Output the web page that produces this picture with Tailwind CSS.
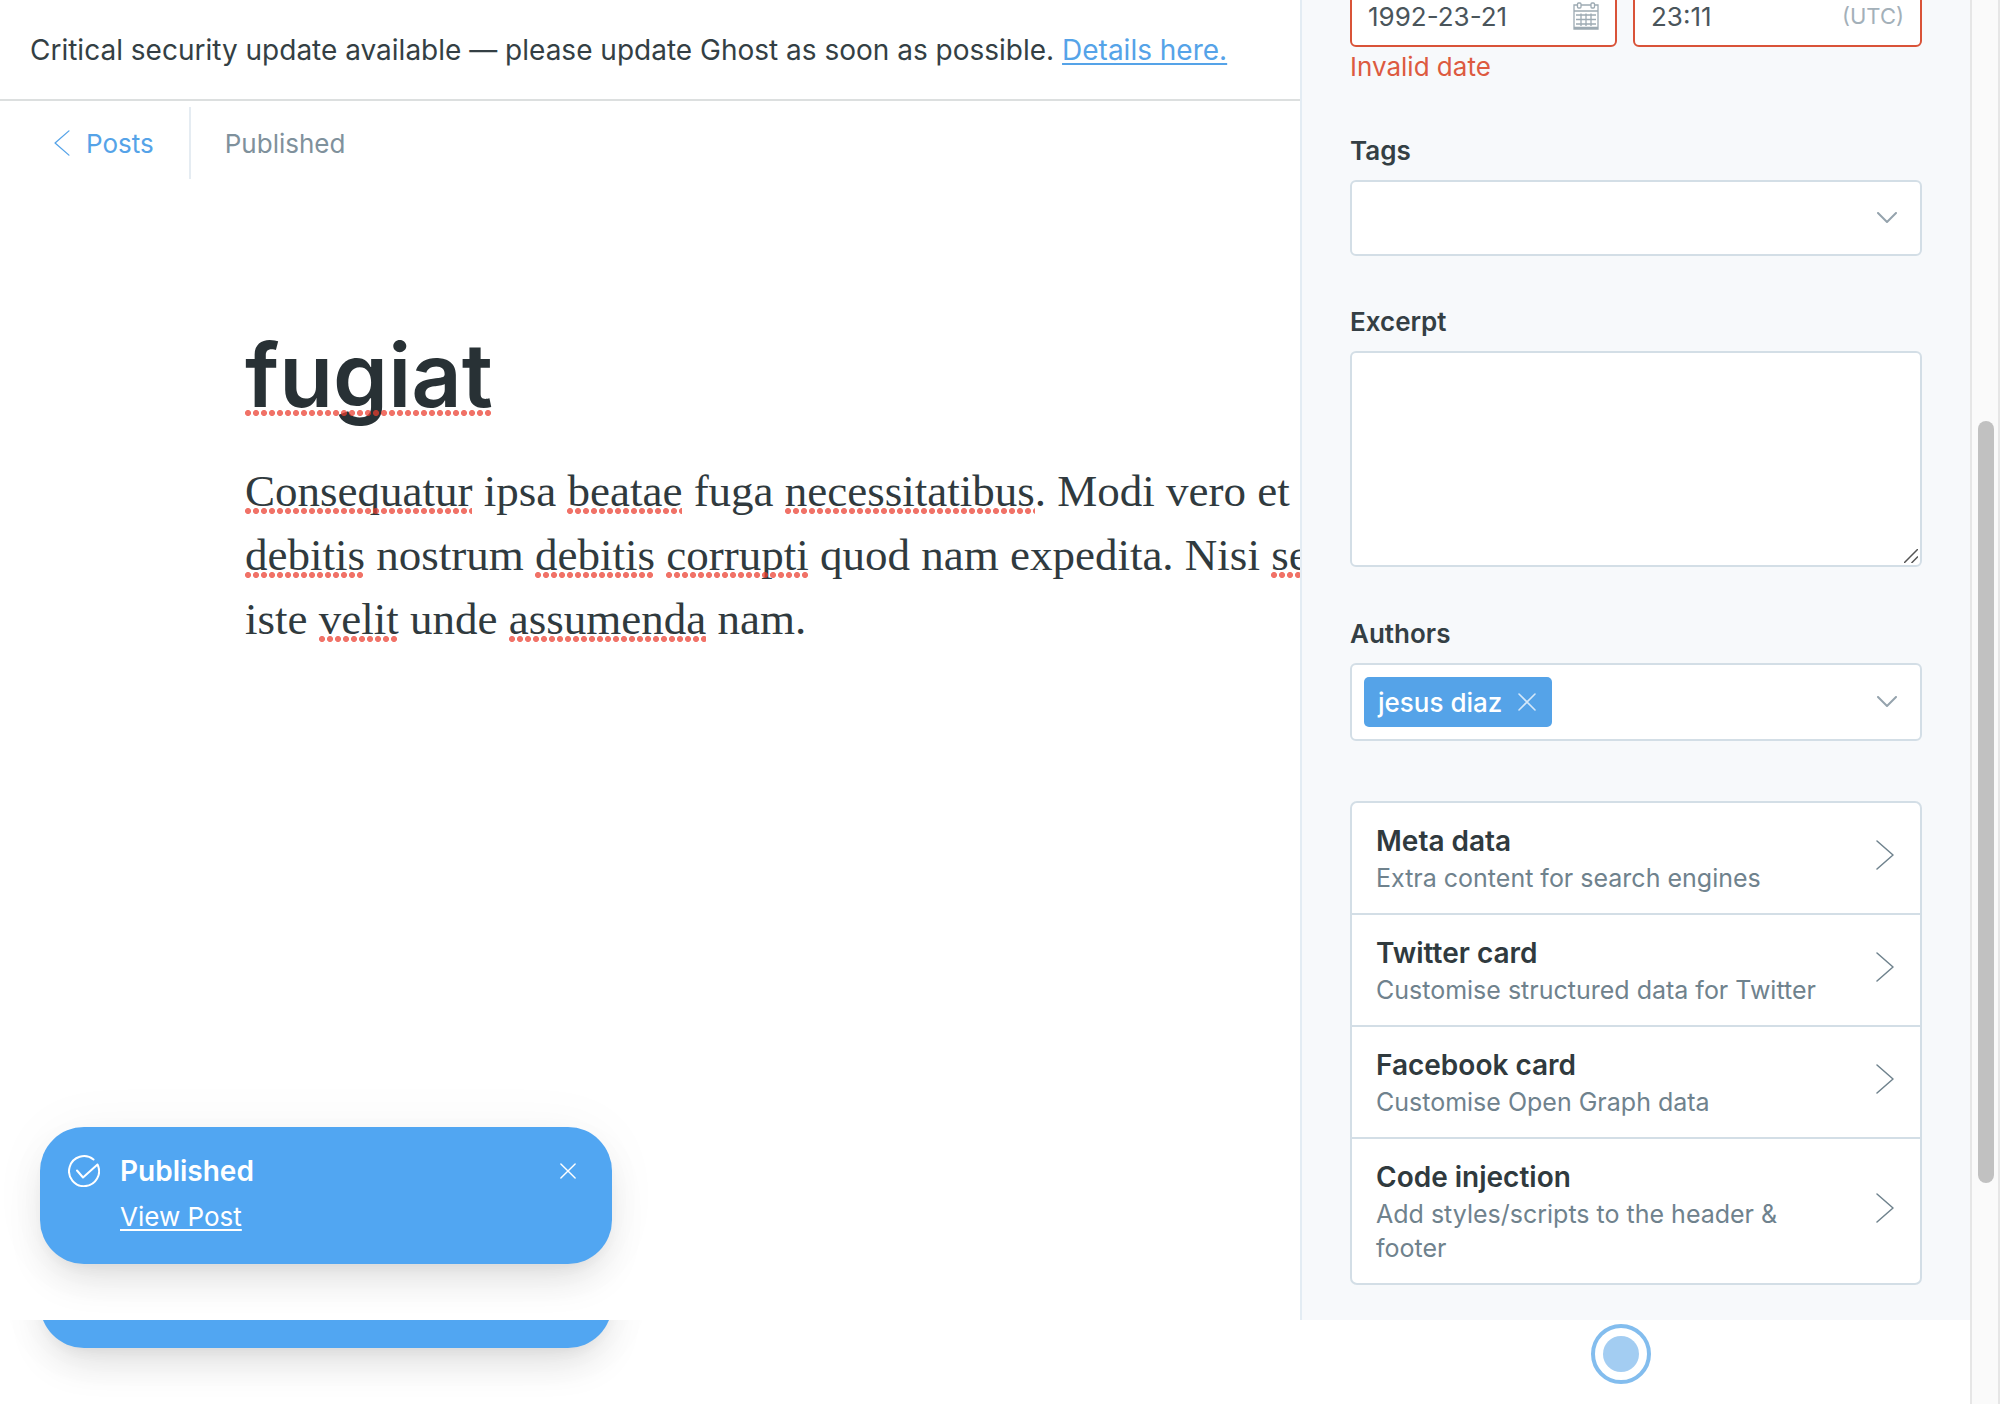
<!DOCTYPE html>
<html lang="en">
<head>
<meta charset="utf-8">
<title>fugiat - Ghost editor</title>
<script src="https://cdn.jsdelivr.net/npm/@tailwindcss/browser@4"></script>
</head>
<body class="flex h-screen overflow-hidden bg-white font-['Inter',sans-serif] text-[26px] text-[#343f44]">
  <svg class="hidden" aria-hidden="true">
    <symbol id="next" viewBox="0 0 18 30"><path d="M1 1l16 14L1 29" fill="none" stroke="currentColor" stroke-width="1.5" stroke-linecap="round" stroke-linejoin="round"/></symbol>
    <symbol id="down" viewBox="0 0 20 12"><path d="M1 1l9 9 9-9" fill="none" stroke="currentColor" stroke-width="2" stroke-linecap="round" stroke-linejoin="round"/></symbol>
    <symbol id="cross" viewBox="0 0 18 18"><path d="M1 1l16 16M17 1L1 17" fill="none" stroke="currentColor" stroke-width="1.600" stroke-linecap="round"/></symbol>
  </svg>

  <div class="flex min-w-0 flex-1 flex-col">
    <div class="flex min-h-0 flex-1">
      <main class="relative min-w-0 flex-1 overflow-hidden">
        <aside class="flex h-[101px] items-center border-b-2 border-[#dcdfdf] px-[30px] text-[28px] whitespace-nowrap">
          <p>Critical security update available — please update Ghost as soon as possible. <a href="#" class="text-[#55a3e8] underline decoration-2 underline-offset-3">Details here.</a></p>
        </aside>
        <header class="flex h-[84px] items-center">
          <a href="#" class="flex h-[72px] items-center gap-4 border-r-2 border-[#e5ecf2] pr-[35px] pl-[54px] text-[#55a3e8]">
            <svg class="h-[26px] w-4 rotate-180"><use href="#next"/></svg>Posts
          </a>
          <span class="pl-[34px] text-[#7f919c]">Published</span>
        </header>
        <article class="w-[1480px] pt-[130px] pl-[245px] text-[#303a3e]">
          <h1 class="text-[88px] leading-[120px] font-semibold text-[#283135]"><span class="relative inline-block after:absolute after:inset-x-0 after:bottom-[19px] after:h-1.5 after:bg-[radial-gradient(circle_at_3px_3px,rgba(235,60,45,0.72)_2.7px,transparent_3.3px)] after:bg-[length:8px_6px]">fugiat</span></h1>
          <p class="mt-6 font-['Liberation_Serif',serif] text-[45px] leading-[64px]"><span class="relative inline-block after:absolute after:inset-x-0 after:bottom-[9px] after:h-1.5 after:bg-[radial-gradient(circle_at_3px_3px,rgba(235,60,45,0.72)_2.7px,transparent_3.3px)] after:bg-[length:8px_6px]">Consequatur</span> ipsa <span class="relative inline-block after:absolute after:inset-x-0 after:bottom-[9px] after:h-1.5 after:bg-[radial-gradient(circle_at_3px_3px,rgba(235,60,45,0.72)_2.7px,transparent_3.3px)] after:bg-[length:8px_6px]">beatae</span> fuga <span class="relative inline-block after:absolute after:inset-x-0 after:bottom-[9px] after:h-1.5 after:bg-[radial-gradient(circle_at_3px_3px,rgba(235,60,45,0.72)_2.7px,transparent_3.3px)] after:bg-[length:8px_6px]">necessitatibus</span>. Modi vero et n<br><span class="relative inline-block after:absolute after:inset-x-0 after:bottom-[9px] after:h-1.5 after:bg-[radial-gradient(circle_at_3px_3px,rgba(235,60,45,0.72)_2.7px,transparent_3.3px)] after:bg-[length:8px_6px]">debitis</span> nostrum <span class="relative inline-block after:absolute after:inset-x-0 after:bottom-[9px] after:h-1.5 after:bg-[radial-gradient(circle_at_3px_3px,rgba(235,60,45,0.72)_2.7px,transparent_3.3px)] after:bg-[length:8px_6px]">debitis</span> <span class="relative inline-block after:absolute after:inset-x-0 after:bottom-[9px] after:h-1.5 after:bg-[radial-gradient(circle_at_3px_3px,rgba(235,60,45,0.72)_2.7px,transparent_3.3px)] after:bg-[length:8px_6px]">corrupti</span> quod nam expedita. Nisi <span class="relative inline-block after:absolute after:inset-x-0 after:bottom-[9px] after:h-1.5 after:bg-[radial-gradient(circle_at_3px_3px,rgba(235,60,45,0.72)_2.7px,transparent_3.3px)] after:bg-[length:8px_6px]">se</span><br>iste <span class="relative inline-block after:absolute after:inset-x-0 after:bottom-[9px] after:h-1.5 after:bg-[radial-gradient(circle_at_3px_3px,rgba(235,60,45,0.72)_2.7px,transparent_3.3px)] after:bg-[length:8px_6px]">velit</span> unde <span class="relative inline-block after:absolute after:inset-x-0 after:bottom-[9px] after:h-1.5 after:bg-[radial-gradient(circle_at_3px_3px,rgba(235,60,45,0.72)_2.7px,transparent_3.3px)] after:bg-[length:8px_6px]">assumenda</span> nam.</p>
        </article>

        <div role="status" class="absolute bottom-14 left-10 flex h-[137px] w-[572px] gap-5 rounded-[44px] bg-[#51a6f2] px-7 pt-6 text-white shadow-[0_20px_40px_-8px_rgba(0,0,0,0.13),0_0_60px_rgba(0,0,0,0.04),0_8px_16px_-8px_rgba(0,0,0,0.06)]">
          <svg class="mt-1 size-8" viewBox="0 0 32 32" fill="none" stroke="currentColor" stroke-width="2" stroke-linecap="round" stroke-linejoin="round"><path d="M25.500 4.500A15 15 0 1 0 29.500 9.500L15 22.500l-6-7"/></svg>
          <div class="flex-1">
            <p class="text-[28px] leading-10 font-semibold">Published</p>
            <a href="#" class="mt-1.5 inline-block leading-10 underline decoration-2 underline-offset-3">View Post</a>
          </div>
          <button type="button" aria-label="Dismiss" class="mt-3 mr-2 size-4"><svg class="size-4"><use href="#cross"/></svg></button>
        </div>
      </main>

      <section aria-label="Post settings" class="w-[670px] shrink-0 overflow-hidden border-l-2 border-[#e3ecf3] bg-[#f7f9fb] pr-12 pl-12">
        <div class="-mt-[15px] flex gap-4">
          <div class="flex h-[62px] w-[267px] shrink-0 items-center rounded-md border-2 border-[#d95338] bg-white pr-4 pl-4">
            <input type="text" aria-label="Publish date" value="1992-23-21" class="min-w-0 flex-1 text-[#4a555b] outline-none">
            <svg class="h-7 w-[26px] text-[#9daab3]" viewBox="0 0 26 28" fill="none" stroke="currentColor" stroke-width="1.300"><path d="M4 3H1v24h24V3h-3M8 3h10M1 9h24M1 25.500h24M3 13h20M3 17.500h20M3 22h20M8 11.500V24M13 11.500V24M18 11.500V24"/><rect x="4.500" y="1" width="3.500" height="5" rx="1"/><rect x="18" y="1" width="3.500" height="5" rx="1"/></svg>
          </div>
          <div class="flex h-[62px] min-w-0 flex-1 items-center rounded-md border-2 border-[#d95338] bg-white pr-4 pl-4">
            <input type="text" aria-label="Publish time" value="23:11" class="min-w-0 flex-1 text-[#4a555b] outline-none">
            <span class="text-[22px] text-[#a3b0b9]">(UTC)</span>
          </div>
        </div>
        <p class="leading-10 text-[#dd5a40]">Invalid date</p>

        <label for="tags" class="mt-11 block leading-10 font-semibold">Tags</label>
        <div class="relative mt-[9px]">
          <select id="tags" class="block h-[76px] w-full appearance-none rounded-md border-2 border-[#d3dee6] bg-white px-4"><option></option></select>
          <svg class="pointer-events-none absolute top-8 right-[25px] h-3 w-5 text-[#95a3ad]"><use href="#down"/></svg>
        </div>

        <label for="excerpt" class="mt-[46px] block leading-10 font-semibold">Excerpt</label>
        <div class="relative mt-[9px]">
          <textarea id="excerpt" class="block h-[216px] w-full resize-none rounded-md border-2 border-[#d3dee6] bg-white p-4"></textarea>
          <svg class="pointer-events-none absolute right-1 bottom-1 size-3.5" viewBox="0 0 14 14" fill="none" stroke="#555" stroke-width="1.500"><path d="M0 14L14 0M7.500 14L14 7.500"/></svg>
        </div>

        <label for="authors" class="mt-[47px] block leading-10 font-semibold">Authors</label>
        <div class="mt-[9px] flex h-[78px] items-center rounded-md border-2 border-[#d3dee6] bg-white pr-[23px] pl-3">
          <span class="flex h-[50px] items-center gap-4 rounded-[5px] bg-[#55a3e8] pr-4 pl-3.5 font-medium text-white">jesus diaz
            <button type="button" aria-label="Remove jesus diaz" class="size-[18px] opacity-75"><svg class="size-[18px]"><use href="#cross"/></svg></button>
          </span>
          <input id="authors" type="text" class="min-w-0 flex-1 outline-none">
          <svg class="h-3 w-5 text-[#95a3ad]"><use href="#down"/></svg>
        </div>

        <nav class="mt-[60px] divide-y-2 divide-[#d3dee6] rounded-[7px] border-2 border-[#d3dee6] bg-white text-[#6f828d]">
          <a href="#" class="flex items-center justify-between pt-5 pr-[26px] pb-[18px] pl-6">
            <span><b class="block text-[28px] leading-9 font-semibold text-[#303a3e]">Meta data</b><span class="mt-0.5 block text-[25px] leading-[34px]">Extra content for search engines</span></span>
            <svg class="mb-2 ml-12 h-[30px] w-[18px] shrink-0"><use href="#next"/></svg>
          </a>
          <a href="#" class="flex items-center justify-between pt-5 pr-[26px] pb-[18px] pl-6">
            <span><b class="block text-[28px] leading-9 font-semibold text-[#303a3e]">Twitter card</b><span class="mt-0.5 block text-[25px] leading-[34px]">Customise structured data for Twitter</span></span>
            <svg class="mb-2 ml-12 h-[30px] w-[18px] shrink-0"><use href="#next"/></svg>
          </a>
          <a href="#" class="flex items-center justify-between pt-5 pr-[26px] pb-[18px] pl-6">
            <span><b class="block text-[28px] leading-9 font-semibold text-[#303a3e]">Facebook card</b><span class="mt-0.5 block text-[25px] leading-[34px]">Customise Open Graph data</span></span>
            <svg class="mb-2 ml-12 h-[30px] w-[18px] shrink-0"><use href="#next"/></svg>
          </a>
          <a href="#" class="flex items-center justify-between pt-5 pr-[26px] pb-[18px] pl-6">
            <span><b class="block text-[28px] leading-9 font-semibold text-[#303a3e]">Code injection</b><span class="mt-0.5 block text-[25px] leading-[34px]">Add styles/scripts to the header &amp; footer</span></span>
            <svg class="mb-2 ml-12 h-[30px] w-[18px] shrink-0"><use href="#next"/></svg>
          </a>
        </nav>
      </section>
    </div>

    <div class="flex h-[84px] shrink-0 justify-between overflow-hidden pl-10">
      <div class="-mt-[109px] h-[137px] w-[572px] rounded-[44px] bg-[#51a6f2] shadow-[0_20px_40px_-8px_rgba(0,0,0,0.13),0_0_60px_rgba(0,0,0,0.04),0_8px_16px_-8px_rgba(0,0,0,0.06)]"></div>
      <div class="mt-1 mr-[319px] flex size-15 items-center justify-center rounded-full border-4 border-[#83bdee]">
        <div class="size-9 rounded-full bg-[#a3cdf2]"></div>
      </div>
    </div>
  </div>

  <div class="h-full w-[30px] shrink-0 border-r-2 border-l-2 border-[#e6e6e6] bg-[#fafafa] pt-[421px] pl-1.5">
    <div class="h-[762px] w-4 rounded-full bg-[#c1c1c1]"></div>
  </div>
</body>
</html>
